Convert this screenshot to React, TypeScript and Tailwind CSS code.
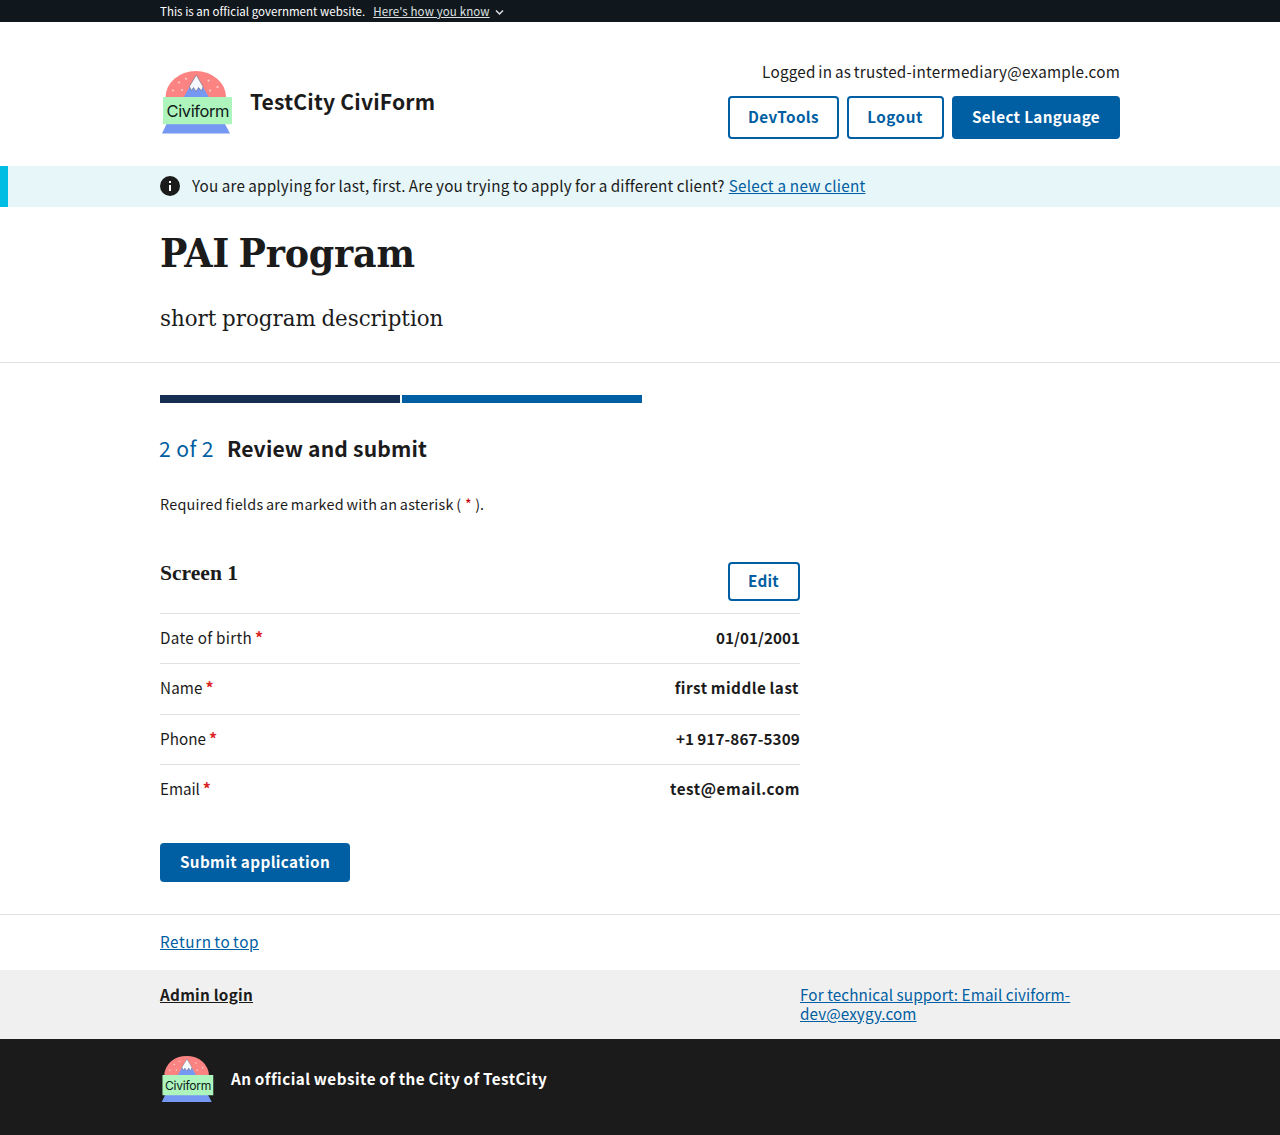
const SANS = "font-['Noto_Sans_CJK_SC',sans-serif]";

function Logo({ className }: { className: string }) {
  return (
    <svg viewBox="0 0 72 66" className={className}>
      <path d="M4.500 27.500a30.300 26.600 0 0 1 60.600 0z" fill="#fb8483" />
      <path d="M35.300 5.500 48 27.500H22.500z" fill="#7598f3" />
      <path d="M35.300 5 42 16.500 40.500 21 37.600 17.500 35 21.500 32.500 17.500 30.500 20.500 28.400 16.400z" fill="#f7f9fc" stroke="#666b78" strokeWidth=".6" />
      <g fill="#fdd5d2">
        <circle cx="18" cy="12.500" r="1" /><circle cx="25" cy="8.700" r="1" /><circle cx="12" cy="20.500" r="1" /><circle cx="21" cy="20" r="1" />
        <circle cx="47.500" cy="10.500" r="1" /><circle cx="56.500" cy="17" r="1" /><circle cx="49" cy="20.500" r="1" />
      </g>
      <path d="M5.500 54H64L69 63.500H1z" fill="#7598f3" />
      <path d="M2 27H71V54.300H2z" fill="#adf5bd" />
      <text x="5.500" y="47.300" fontFamily="Inter, sans-serif" fontSize="16.500" textLength="63" fill="#10201a">Civiform</text>
    </svg>
  );
}

interface AnswerRowProps {
  label: string;
  value: string;
  height: string;
  labelTracking: string;
  valueTracking: string;
}

const ANSWERS: AnswerRowProps[] = [
  { label: "Date of birth", value: "01/01/2001", height: "h-[50px]", labelTracking: "tracking-[0.28px]", valueTracking: "tracking-[0.02px]" },
  { label: "Name", value: "first middle last", height: "h-[51px]", labelTracking: "tracking-[0.1px]", valueTracking: "mr-px tracking-[0.5px] [word-spacing:-0.8px]" },
  { label: "Phone", value: "+1 917-867-5309", height: "h-[50px]", labelTracking: "tracking-normal", valueTracking: "tracking-[0.13px] [word-spacing:-0.6px]" },
  { label: "Email", value: "test@email.com", height: "h-[79px]", labelTracking: "tracking-[-0.1px]", valueTracking: "tracking-[0.53px]" },
];

function AnswerRow({ label, value, height, labelTracking, valueTracking }: AnswerRowProps) {
  return (
    <div className={`flex justify-between border-t border-[#dfe1e2] leading-[47px] ${height}`}>
      <div>
        <span className={labelTracking}>{label}</span>
        <span className="ml-[3px] text-[16px] font-bold text-[#dc2626]">*</span>
      </div>
      <div className={`font-bold ${valueTracking}`}>{value}</div>
    </div>
  );
}

export default function App() {
  return (
    <div className={`min-h-[1135px] bg-white text-[15.25px] text-[#1b1b1b] ${SANS}`}>
      <div className="h-[22px] bg-[#11181d] text-[11.5px] leading-[22px] text-white">
        <div className="mx-auto flex w-[960px]">
          <span className="tracking-[0.03px]">This is an official government website.</span>
          <a className="ml-2 tracking-[0.13px] text-[#dfe1e2] underline">Here's how you know</a>
          <svg className="ml-[5px] mt-2 h-2 w-[9px]" viewBox="0 0 9 8">
            <path d="M1 2.500 4.500 6 8 2.500" fill="none" stroke="#dfe1e2" strokeWidth="1.500" />
          </svg>
        </div>
      </div>

      <header className="mx-auto flex h-[144px] w-[960px] justify-between">
        <div className="flex pt-[48px]">
          <Logo className="ml-px h-[66px] w-[72px]" />
          <span className="ml-[17px] mt-[-1px] text-[21.1px] font-bold leading-[64px] tracking-[0.19px]">TestCity CiviForm</span>
        </div>
        <div className="flex flex-col items-end pt-[38px]">
          <span className="h-9 leading-[22px] tracking-[0.23px] [word-spacing:-1px]">Logged in as trusted-intermediary@example.com</span>
          <div className="flex gap-2 text-center font-bold leading-[37px]">
            <button className="flex h-[43px] w-[111px] justify-center rounded border-2 border-[#005ea2] tracking-[0.4px] text-[#005ea2]">DevTools</button>
            <button className="flex h-[43px] w-[97px] justify-center rounded border-2 border-[#005ea2] pr-px tracking-[0.5px] text-[#005ea2]">Logout</button>
            <button className="flex h-[43px] w-[168px] justify-center rounded border-2 border-[#005ea2] bg-[#005ea2] tracking-[0.34px] text-white">Select Language</button>
          </div>
        </div>
      </header>

      <div className="h-[41px] border-l-8 border-[#00bde3] bg-[#e7f6f8] pl-[152px] leading-[38px]">
        <div className="flex">
          <svg className="mt-[10px] h-5 w-5" viewBox="0 0 20 20">
            <circle cx="10" cy="10" r="10" fill="#1b1b1b" />
            <path d="M9 5h2v2H9zM9 9h2v6H9z" fill="#fff" />
          </svg>
          <span className="ml-3 tracking-[0.2px] [word-spacing:-0.45px]">You are applying for last, first. Are you trying to apply for a different client?</span>
          <a className="ml-1 tracking-[0.23px] text-[#005ea2] underline">Select a new client</a>
        </div>
      </div>

      <div className="h-[156px] border-b border-[#dfe1e2] font-['DejaVu_Serif_Condensed','DejaVu_Serif',serif]">
        <div className="mx-auto w-[960px]">
          <h1 className="h-[90px] w-fit origin-left scale-x-[1.025] text-[39.500px] font-bold leading-[93px] tracking-[-0.2px] [word-spacing:-3px]">PAI Program</h1>
          <p className="w-fit origin-left scale-x-[1.055] text-[22.500px] leading-[43px] [word-spacing:-1px]">short program description</p>
        </div>
      </div>

      <main className="mx-auto h-[551px] w-[960px] pt-8">
        <div className="flex gap-[2px]">
          <div className="h-2 w-60 bg-[#162e51]" />
          <div className="h-2 w-60 bg-[#005ea2]" />
        </div>
        <div className="flex pt-[25px] text-[21.1px] leading-[40px]">
          <span className="-ml-px w-[68px] tracking-[0.4px] text-[#005ea2]">2 of 2</span>
          <h2 className="font-bold tracking-[0.15px]">Review and submit</h2>
        </div>
        <p className="h-[50px] pt-[24px] text-[14.4px] leading-[24px]">
          <span className="tracking-[0.25px] [word-spacing:-0.85px]">Required fields are marked with an asterisk (</span>
          <span className="ml-[3.500px] text-[#c00]">*</span>
          <span className="ml-[3.500px]">).</span>
        </p>
        <div className="mt-[44px] w-[640px]">
          <div className="flex h-[51px] justify-between">
            <h3 className="font-['Liberation_Serif',serif] text-[21.6px] font-bold leading-[22px]">Screen 1</h3>
            <button className="flex h-[39px] w-[72px] justify-center rounded border-2 border-[#005ea2] pr-px font-bold leading-[33px] tracking-[0.25px] text-[#005ea2]">Edit</button>
          </div>
          {ANSWERS.map((answer) => (
            <AnswerRow key={answer.label} {...answer} />
          ))}
          <button className="flex h-[39px] w-[190px] justify-center rounded bg-[#005ea2] font-bold leading-[37px] tracking-[0.38px] text-white">Submit application</button>
        </div>
      </main>

      <div className="h-14 border-t border-[#dfe1e2]">
        <div className="mx-auto w-[960px] leading-[52px] text-[#005ea2]">
          <a className="tracking-[0.6px] underline [word-spacing:-1.300px]">Return to top</a>
        </div>
      </div>
      <div className="h-[69px] bg-[#f0f0f0] pt-[15px]">
        <div className="mx-auto flex w-[960px] leading-[19px]">
          <div className="w-[640px]">
            <a className="font-bold tracking-[0.27px] underline">Admin login</a>
          </div>
          <a className="w-[300px] tracking-[0.1px] text-[#005ea2] underline">For technical support: Email civiform-dev@exygy.com</a>
        </div>
      </div>
      <footer className="h-24 bg-[#1b1b1b] pt-4 text-white">
        <div className="mx-auto flex w-[960px]">
          <Logo className="ml-px h-[49px] w-[53px]" />
          <span className="ml-[17px] font-bold leading-[46px] tracking-[0.47px] [word-spacing:-0.6px]">An official website of the City of TestCity</span>
        </div>
      </footer>
    </div>
  );
}
